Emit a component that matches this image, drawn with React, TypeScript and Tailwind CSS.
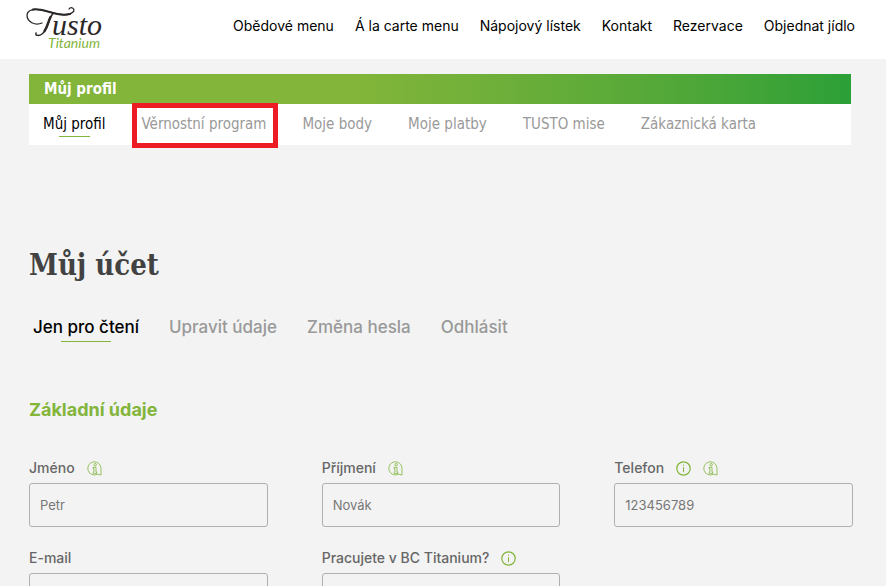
import type { ReactNode } from "react";

const menu = ["Obědové menu", "Á la carte menu", "Nápojový lístek", "Kontakt", "Rezervace", "Objednat jídlo"];
const profileTabs = ["Můj profil", "Věrnostní program", "Moje body", "Moje platby", "TUSTO mise", "Zákaznická karta"];
const accountTabs = ["Jen pro čtení", "Upravit údaje", "Změna hesla", "Odhlásit"];

const Logo = () => {
    return (
        <svg width="84" height="50" viewBox="0 0 84 50" role="img" aria-label="Tusto Titanium">
            <g fill="none" stroke="#2b2728" strokeLinecap="round">
                <path d="M18 23C11 26 3 22 3 15C4 7 17 9 26 12C35 15 45 16 49 12C52 9 47 6 45 9" strokeWidth="1.3"/>
                <path d="M9 9.500C15 8.500 21 11 29 13C36 15 42 15 46 14" strokeWidth="2"/>
                <path d="M29 13.500C24 19 24 30 18 34C15 36 11 36 12 33" strokeWidth="1.500"/>
                <path d="M26.500 17C24 22 23.500 27 20.500 31" strokeWidth="2.500"/>
            </g>
            <text x="28" y="35" fontSize="30" fill="#2b2728" fontFamily="'Liberation Serif', serif" fontStyle="italic">usto</text>
            <text x="24" y="48" fontSize="14" fill="#82b53a" fontFamily="Lato, sans-serif" fontStyle="italic">Titanium</text>
        </svg>
    )
}

const InfoIcon = () => {
    return (
        <svg width="15" height="15" viewBox="0 0 15 15" fill="none" stroke="#82b53a" aria-hidden="true">
            <circle cx="7.5" cy="7.5" r="6.700" strokeWidth="1.2"/>
            <path d="M7.5 6.2v5M7.5 3.6v1.2"/>
        </svg>
    )
}

const BubbleIcon = () => {
    return (
        <svg width="15" height="15" viewBox="0 0 15 15" fill="none" stroke="#82b53a" strokeWidth="0.8" aria-hidden="true">
            <path d="M10.5 13.2A6.6 6.6 0 1 1 14 7.5V14l-3.5-.8"/>
            <circle cx="8.2" cy="3.700" r="1.2"/>
            <path d="M6 6.300h3v4.800h.8v1.3H6.300v-1.3h.6V7.500H6z"/>
        </svg>
    )
}

type FieldProps = {
    id: string;
    label: string;
    value?: string;
    children?: ReactNode;
}

const Field = ({ id, label, value = "", children }: FieldProps) => {
    return (
        <div>
            <div className="mb-[5px] flex h-5 items-center gap-3">
                <label htmlFor={id} className="text-sm font-medium text-[#666]">{label}</label>
                {children}
            </div>
            <input
            id={id}
            defaultValue={value}
            readOnly
            className="block h-11 w-full rounded-[3px] border border-[#b0b0b0] bg-transparent px-2.5 text-[13px] text-[#777]"
            />
        </div>
    )
}

const App = () => {
    return (
        <div className="min-h-screen bg-[#f3f3f3] font-[Inter,sans-serif]">
            <header className="flex h-[59px] items-start justify-between bg-white pl-6 pr-[31px]">
                <a href="#"><Logo/></a>
                <nav className="flex gap-[21px] pt-4 text-sm leading-5 text-black">
                    {menu.map((item) => (
                        <a key={item} href="#" className="whitespace-nowrap">{item}</a>
                    ))}
                </nav>
            </header>
            <main className="pl-[29px] pr-[33px] pt-[15px] pb-2">
                <section className="mr-0.5 bg-white font-['DejaVu_Sans_Condensed','DejaVu_Sans',sans-serif]">
                    <h2 className="bg-linear-to-r from-[#82b53a] from-40% to-[#2aa037] px-[15px] text-[15px] leading-[30px] font-bold text-white">
                        Můj profil
                    </h2>
                    <nav className="flex h-[41px] gap-9 px-3.5 text-[15px] leading-10 text-[#999]">
                        {profileTabs.map((tab, i) => (
                            <a key={tab} href="#" className={i === 0 ? "relative whitespace-nowrap text-black" : "relative whitespace-nowrap"}>
                                {tab}
                                {i === 0 && <span className="absolute inset-x-4 bottom-2 h-px bg-[#82b53a]"/>}
                                {i === 1 && <span className="absolute -left-2.5 -right-3 -top-px -bottom-[3px] border-5 border-[#ed1c24]"/>}
                            </a>
                        ))}
                    </nav>
                </section>
                <h1 className="mt-24 font-['DejaVu_Serif_Condensed','DejaVu_Serif',serif] text-[29px] leading-[48px] font-bold text-[#424242]">
                    Můj účet
                </h1>
                <nav className="mt-[26px] flex gap-[30px] px-1 text-[17px] leading-6 font-medium text-[#999]">
                    {accountTabs.map((tab, i) => (
                        <a key={tab} href="#" className={i === 0 ? "relative whitespace-nowrap text-black" : "relative whitespace-nowrap"}>
                            {tab}
                            {i === 0 && <span className="absolute inset-x-7 -bottom-[3px] h-px bg-[#82b53a]"/>}
                        </a>
                    ))}
                </nav>
                <h3 className="mt-[59px] text-lg leading-6 font-bold text-[#82b53a]">Základní údaje</h3>
                <form className="mt-9 grid grid-cols-3 gap-x-[54px] gap-y-[21px]">
                    <Field id="name" label="Jméno" value="Petr"><BubbleIcon/></Field>
                    <Field id="surname" label="Příjmení" value="Novák"><BubbleIcon/></Field>
                    <Field id="phone" label="Telefon" value="123456789"><InfoIcon/><BubbleIcon/></Field>
                    <Field id="email" label="E-mail"/>
                    <Field id="company" label="Pracujete v BC Titanium?"><InfoIcon/></Field>
                </form>
            </main>
        </div>
    )
}

export default App;
